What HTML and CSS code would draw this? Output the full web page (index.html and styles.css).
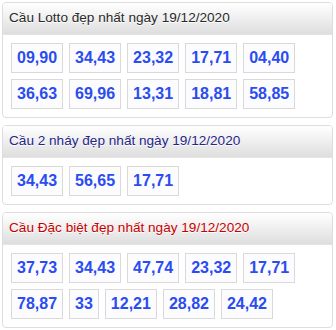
FILE: index.html
```html
<!DOCTYPE html>
<html lang="vi">
<head>
<meta charset="utf-8">
<link rel="stylesheet" href="styles.css">
</head>
<body>
<div class="panel">
  <div class="panel-head">Cầu Lotto đẹp nhất ngày 19/12/2020</div>
  <div class="panel-body">
    <span class="num">09,90</span><span class="num">34,43</span><span class="num">23,32</span><span class="num">17,71</span><span class="num">04,40</span>
    <span class="num">36,63</span><span class="num">69,96</span><span class="num">13,31</span><span class="num">18,81</span><span class="num">58,85</span>
  </div>
</div>
<div class="panel">
  <div class="panel-head head-blue">Cầu 2 nháy đẹp nhất ngày 19/12/2020</div>
  <div class="panel-body">
    <span class="num">34,43</span><span class="num">56,65</span><span class="num">17,71</span>
  </div>
</div>
<div class="panel">
  <div class="panel-head head-red">Cầu Đặc biệt đẹp nhất ngày 19/12/2020</div>
  <div class="panel-body">
    <span class="num">37,73</span><span class="num">34,43</span><span class="num">47,74</span><span class="num">23,32</span><span class="num">17,71</span>
    <span class="num">78,87</span><span class="num">33</span><span class="num">12,21</span><span class="num">28,82</span><span class="num">24,42</span>
  </div>
</div>
</body>
</html>
```
FILE: styles.css
```css
html, body {
  background: #ffffff;
}
body {
  margin: 2px 3px 0 2px;
  font-family: "Liberation Sans", Arial, sans-serif;
}
.panel {
  border: 1px solid #dddddd;
  border-radius: 4px;
  margin-bottom: 7px;
  background: #ffffff;
  overflow: hidden;
}
.panel-head {
  height: 31px;
  line-height: 30px;
  padding: 0 6px;
  font-size: 13.6px;
  color: #2a2a2a;
  text-shadow: 0 1px 0 #ffffff;
  background: linear-gradient(to bottom, #ffffff 0%, #f2f2f2 40%, #dedede 100%);
  border-bottom: 1px solid #e4e4e4;
  white-space: nowrap;
}
.head-blue {
  color: #25258a;
}
.head-red {
  color: #c80000;
}
.panel-body {
  display: flex;
  flex-wrap: wrap;
  gap: 6px;
  padding: 8px;
  width: 300px;
}
.num {
  display: block;
  height: 28px;
  line-height: 28px;
  padding: 0 5px;
  border: 1px solid #d9d9d9;
  background: #fcfcfe;
  color: #2a4cf0;
  font-size: 16px;
  font-weight: bold;
}
```
